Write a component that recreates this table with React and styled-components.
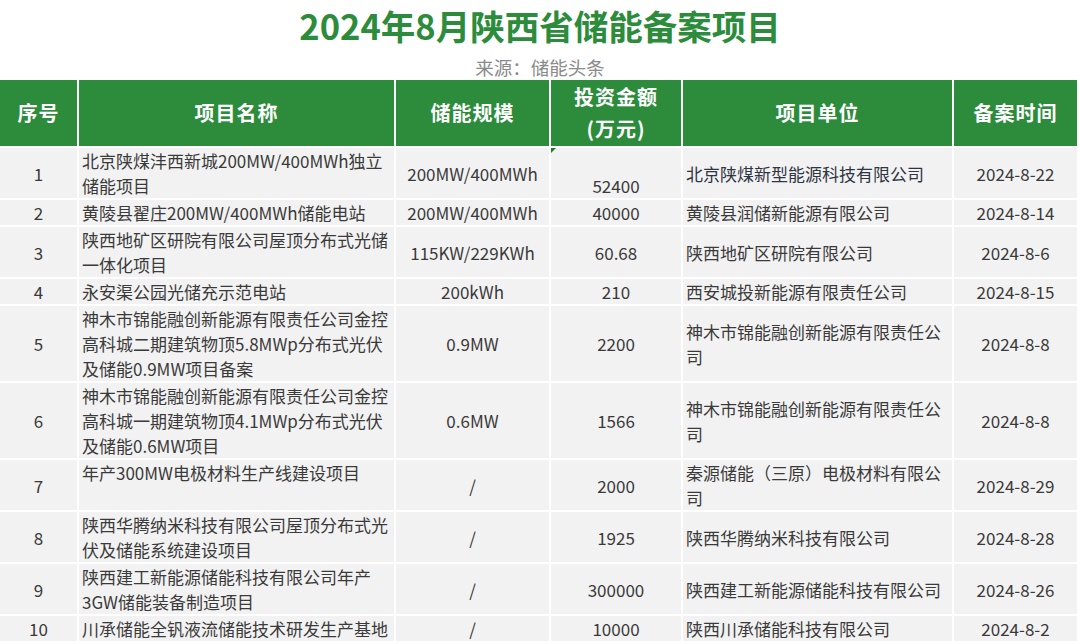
import React from 'react';
import styled, { createGlobalStyle } from 'styled-components';

const GlobalStyle = createGlobalStyle`
  html, body {
    margin: 0;
    padding: 0;
    background: #ffffff;
  }
  body {
    font-family: "Noto Sans CJK SC", "Noto Sans", sans-serif;
    width: 1080px;
    overflow: hidden;
  }
`;

const COLS = '77px 315px 153px 130px 269px 123px';
const GREEN = '#2c8c3b';

const Page = styled.div`
  width: 1080px;
  height: 644px;
  overflow: hidden;
  background: #fff;
`;

const Heading = styled.header`
  height: 80px;
  display: flex;
  flex-direction: column;
  align-items: center;
`;

const Title = styled.h1`
  margin: 3px 0 0;
  font-size: 34.5px;
  line-height: 44px;
  font-weight: 700;
  color: ${GREEN};
`;

const Source = styled.div`
  margin-top: 7px;
  font-size: 18.5px;
  line-height: 26px;
  color: #8a8a8a;
`;

const Table = styled.div`
  width: 1077px;
  display: flex;
  flex-direction: column;
  gap: 2px;
`;

const Row = styled.div`
  display: grid;
  grid-template-columns: ${COLS};
  column-gap: 2px;
`;

const HeadCell = styled.div`
  height: 66px;
  background: ${GREEN};
  color: #fff;
  font-size: 20px;
  font-weight: 700;
  letter-spacing: 1px;
  line-height: 32px;
  display: flex;
  flex-direction: column;
  align-items: center;
  justify-content: center;
  text-align: center;
`;

const Cell = styled.div`
  position: relative;
  background: #f2f2f2;
  font-size: 17px;
  line-height: 25px;
  display: flex;
  flex-direction: column;
  justify-content: ${p => (p.$v === 'top' ? 'flex-start' : p.$v === 'bottom' ? 'flex-end' : 'center')};
  align-items: ${p => (p.$left ? 'flex-start' : 'center')};
  padding: 0 ${p => (p.$left ? '3px' : '0')};
  white-space: nowrap;
  color: ${p => (p.$ink ? '#2f3542' : '#3a3a3a')};
`;

const Marker = styled.span`
  position: absolute;
  top: 0;
  left: 0;
  width: 0;
  height: 0;
  border-top: 5px solid #1f7a2e;
  border-right: 5px solid transparent;
`;

const headers = [
  ['序号'],
  ['项目名称'],
  ['储能规模'],
  ['投资金额', '(万元)'],
  ['项目单位'],
  ['备案时间'],
];

const rows = [
  {
    no: '1',
    name: ['北京陕煤沣西新城200MW/400MWh独立', '储能项目'],
    scale: '200MW/400MWh',
    money: '52400',
    moneyAlign: 'bottom',
    marker: true,
    unit: ['北京陕煤新型能源科技有限公司'],
    unitInk: true,
    date: '2024-8-22',
  },
  {
    no: '2',
    name: ['黄陵县翟庄200MW/400MWh储能电站'],
    scale: '200MW/400MWh',
    money: '40000',
    unit: ['黄陵县润储新能源有限公司'],
    date: '2024-8-14',
  },
  {
    no: '3',
    name: ['陕西地矿区研院有限公司屋顶分布式光储', '一体化项目'],
    scale: '115KW/229KWh',
    money: '60.68',
    unit: ['陕西地矿区研院有限公司'],
    date: '2024-8-6',
  },
  {
    no: '4',
    name: ['永安渠公园光储充示范电站'],
    scale: '200kWh',
    money: '210',
    unit: ['西安城投新能源有限责任公司'],
    date: '2024-8-15',
  },
  {
    no: '5',
    name: ['神木市锦能融创新能源有限责任公司金控', '高科城二期建筑物顶5.8MWp分布式光伏', '及储能0.9MW项目备案'],
    scale: '0.9MW',
    money: '2200',
    unit: ['神木市锦能融创新能源有限责任公', '司'],
    date: '2024-8-8',
  },
  {
    no: '6',
    name: ['神木市锦能融创新能源有限责任公司金控', '高科城一期建筑物顶4.1MWp分布式光伏', '及储能0.6MW项目'],
    scale: '0.6MW',
    money: '1566',
    unit: ['神木市锦能融创新能源有限责任公', '司'],
    date: '2024-8-8',
  },
  {
    no: '7',
    name: ['年产300MW电极材料生产线建设项目'],
    nameAlign: 'top',
    scale: '/',
    money: '2000',
    unit: ['秦源储能（三原）电极材料有限公', '司'],
    date: '2024-8-29',
  },
  {
    no: '8',
    name: ['陕西华腾纳米科技有限公司屋顶分布式光', '伏及储能系统建设项目'],
    scale: '/',
    money: '1925',
    unit: ['陕西华腾纳米科技有限公司'],
    date: '2024-8-28',
  },
  {
    no: '9',
    name: ['陕西建工新能源储能科技有限公司年产', '3GW储能装备制造项目'],
    scale: '/',
    money: '300000',
    unit: ['陕西建工新能源储能科技有限公司'],
    date: '2024-8-26',
  },
  {
    no: '10',
    name: ['川承储能全钒液流储能技术研发生产基地'],
    scale: '/',
    money: '10000',
    unit: ['陕西川承储能科技有限公司'],
    date: '2024-8-2',
  },
];

const Lines = ({ lines }) => lines.map((l, i) => <span key={i}>{l}</span>);

export default function App() {
  return (
    <Page>
      <GlobalStyle />
      <Heading>
        <Title>2024年8月陕西省储能备案项目</Title>
        <Source>来源：储能头条</Source>
      </Heading>
      <Table>
        <Row>
          {headers.map((h, i) => (
            <HeadCell key={i}>
              <Lines lines={h} />
            </HeadCell>
          ))}
        </Row>
        {rows.map(r => (
          <Row key={r.no}>
            <Cell>{r.no}</Cell>
            <Cell $left $v={r.nameAlign}>
              <Lines lines={r.name} />
            </Cell>
            <Cell>{r.scale}</Cell>
            <Cell $v={r.moneyAlign}>
              {r.marker && <Marker />}
              {r.money}
            </Cell>
            <Cell $left $ink={r.unitInk}>
              <Lines lines={r.unit} />
            </Cell>
            <Cell>{r.date}</Cell>
          </Row>
        ))}
      </Table>
    </Page>
  );
}
